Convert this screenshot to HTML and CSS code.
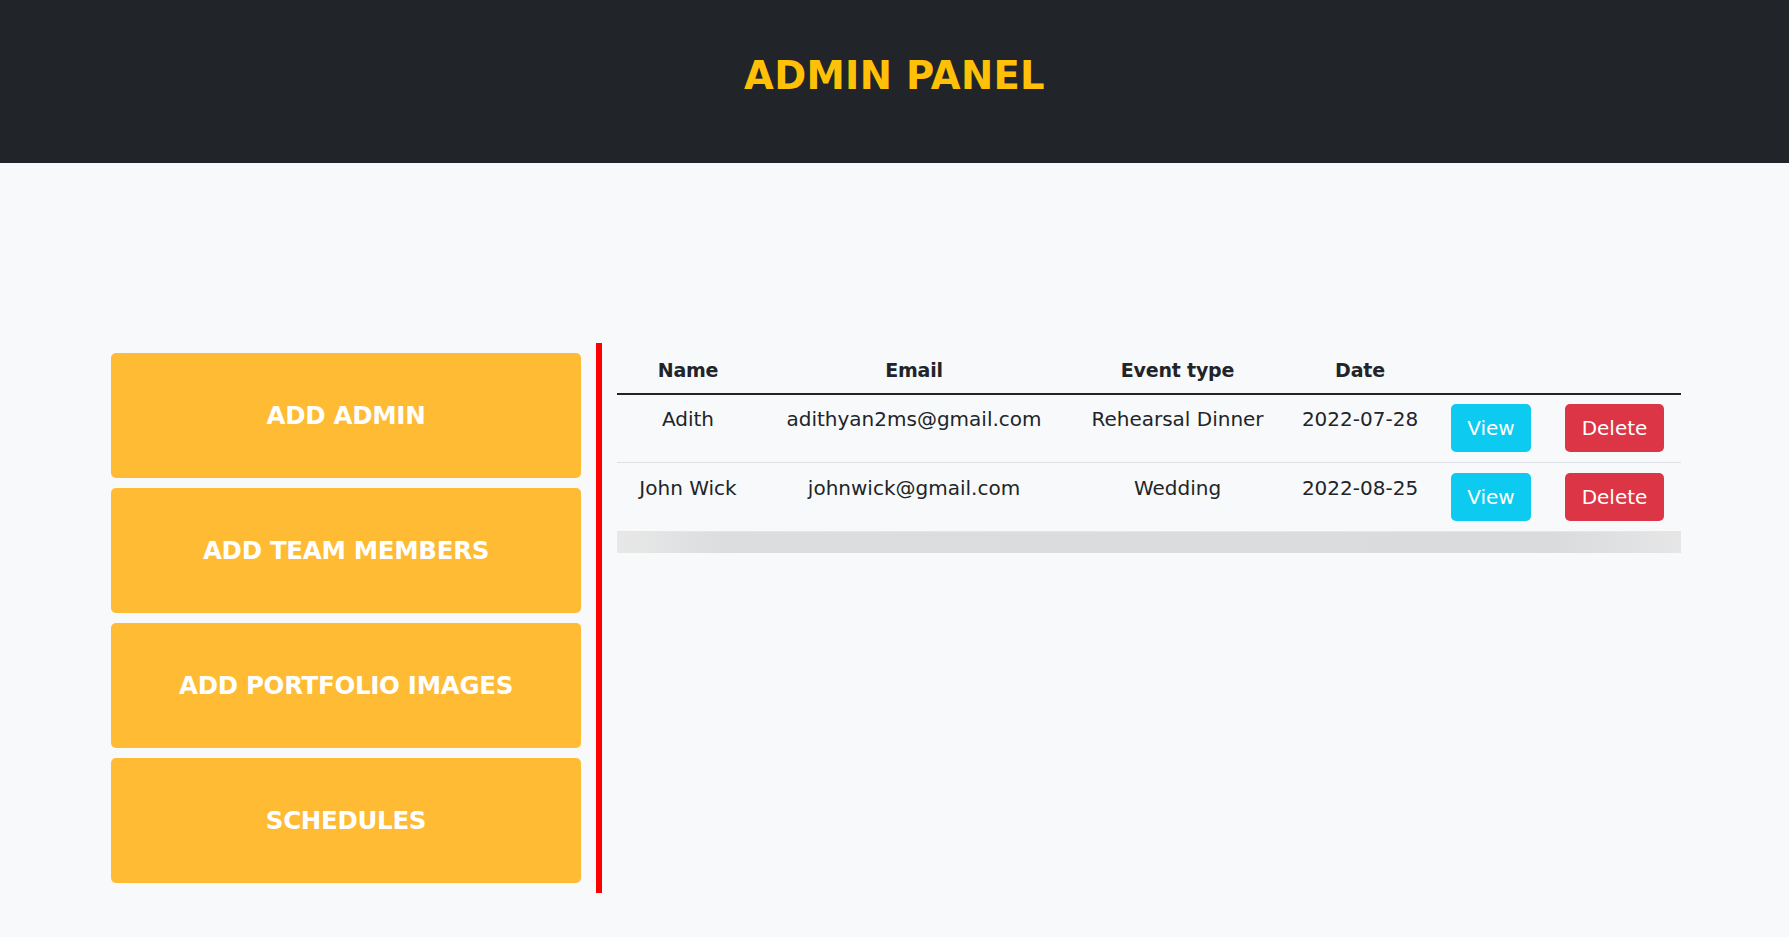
FILE: index.html
```html
<!DOCTYPE html>
<html lang="en">
<head>
<meta charset="utf-8">
<title>Admin Panel</title>
<link rel="stylesheet" href="styles.css">
</head>
<body>
<header class="topbar">
  <h1 class="title">ADMIN PANEL</h1>
</header>
<main class="main">
  <nav class="sidebar">
    <a class="side-btn" href="#">ADD ADMIN</a>
    <a class="side-btn" href="#">ADD TEAM MEMBERS</a>
    <a class="side-btn" href="#">ADD PORTFOLIO IMAGES</a>
    <a class="side-btn" href="#">SCHEDULES</a>
  </nav>
  <section class="content">
    <table class="table">
      <colgroup>
        <col class="c-name"><col class="c-email"><col class="c-event"><col class="c-date"><col class="c-view"><col class="c-del">
      </colgroup>
      <thead>
        <tr><th>Name</th><th>Email</th><th>Event type</th><th>Date</th><th></th><th></th></tr>
      </thead>
      <tbody>
        <tr>
          <td>Adith</td><td>adithyan2ms@gmail.com</td><td>Rehearsal Dinner</td><td>2022-07-28</td>
          <td><button class="btn btn-view">View</button></td>
          <td><button class="btn btn-del">Delete</button></td>
        </tr>
        <tr>
          <td>John Wick</td><td>johnwick@gmail.com</td><td>Wedding</td><td>2022-08-25</td>
          <td><button class="btn btn-view">View</button></td>
          <td><button class="btn btn-del">Delete</button></td>
        </tr>
      </tbody>
    </table>
    <div class="table-foot"></div>
  </section>
</main>
</body>
</html>
```

FILE: styles.css
```css
* { box-sizing: border-box; }
html, body { margin: 0; padding: 0; }
body {
  background: #f8f9fa;
  color: #212529;
  font-family: "DejaVu Sans", "Liberation Sans", sans-serif;
  min-height: 937px;
}
.topbar {
  background: #212529;
  height: 163px;
  padding-top: 52px;
  text-align: center;
}
.title {
  margin: 0;
  font-size: 38.5px;
  line-height: 48px;
  font-weight: 700;
  color: #ffc107;
  letter-spacing: 0.3px;
}
.main {
  display: flex;
  align-items: flex-start;
  padding: 180px 0 0 111px;
}
.sidebar {
  width: 491px;
  padding: 10px 15px 10px 0;
  border-right: 6px solid #ff0000;
  display: flex;
  flex-direction: column;
  gap: 10px;
}
.side-btn {
  display: flex;
  align-items: center;
  justify-content: center;
  height: 125px;
  background: #ffbb33;
  border-radius: 5px;
  color: #fff;
  text-decoration: none;
  font-weight: 700;
  font-size: 24.5px;
  letter-spacing: -0.3px;
}
.content {
  padding: 4px 0 0 15px;
  width: 1079px;
}
.table {
  width: 1064px;
  table-layout: fixed;
  border-collapse: collapse;
  font-size: 20px;
  line-height: 30px;
  font-weight: 400;
}
.c-name { width: 142px; }
.c-email { width: 310px; }
.c-event { width: 217px; }
.c-date { width: 148px; }
.c-view { width: 114px; }
.c-del { width: 133px; }
.table th {
  padding: 8px 8px;
  font-size: 19px;
  font-weight: 700;
  letter-spacing: -0.2px;
  text-align: center;
  border-bottom: 2px solid #212529;
}
.table td {
  padding: 10px 8px 10px;
  text-align: center;
  vertical-align: top;
  white-space: nowrap;
  border-bottom: 1px solid #dee2e6;
}
.table tbody tr:first-child td { padding-top: 9px; }
.table tbody tr:last-child td { border-bottom: 1px solid #e4e5e6; }
.btn {
  display: inline-block;
  height: 48px;
  border: 0;
  border-radius: 5px;
  color: #fff;
  font-family: inherit;
  font-size: 20px;
  line-height: 48px;
  padding: 0;
  vertical-align: top;
}
.btn-view { width: 80px; background: #0dcaf0; }
.btn-del { width: 99px; background: #dc3545; }
.table-foot {
  height: 21px;
  background: linear-gradient(90deg, #e8e8e8 0%, #dcdddf 10%, #dadbdc 88%, #e6e6e7 100%);
}
```
